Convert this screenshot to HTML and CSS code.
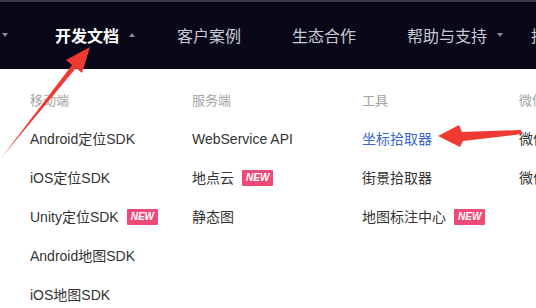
FILE: index.html
```html
<!DOCTYPE html>
<html lang="zh-CN">
<head>
  <meta charset="UTF-8" />
  <title>开发文档</title>
  <link rel="stylesheet" href="styles.css">
</head>
<body>

  <!-- top navigation -->
  <nav class="navbar">
    <span class="caret caret-down edge-caret"></span>
    <a class="nav-item active">开发文档<span class="caret caret-up"></span></a>
    <a class="nav-item">客户案例</a>
    <a class="nav-item">生态合作</a>
    <a class="nav-item help">帮助与支持<span class="caret caret-down"></span></a>
    <a class="nav-item">推</a>
  </nav>

  <!-- dropdown panel -->
  <div class="menu">
    <div class="col">
      <div class="col-title">移动端</div>
      <a class="link">Android定位SDK</a>
      <a class="link">iOS定位SDK</a>
      <a class="link">Unity定位SDK <span class="badge">NEW</span></a>
      <a class="link">Android地图SDK</a>
      <a class="link">iOS地图SDK</a>
    </div>
    <div class="col">
      <div class="col-title">服务端</div>
      <a class="link">WebService API</a>
      <a class="link">地点云 <span class="badge">NEW</span></a>
      <a class="link">静态图</a>
    </div>
    <div class="col">
      <div class="col-title">工具</div>
      <a class="link current">坐标拾取器</a>
      <a class="link">街景拾取器</a>
      <a class="link">地图标注中心 <span class="badge">NEW</span></a>
    </div>
    <div class="col">
      <div class="col-title">微信</div>
      <a class="link">微信小程序</a>
      <a class="link">微信公众号</a>
    </div>
  </div>

  <!-- annotation arrows drawn over the screenshot -->
  <svg class="marks" width="536" height="308" viewBox="0 0 536 308">
    <polygon points="90,47 82,73 76,68 2,157 72,65 66,60" fill="#ee3a33"/>
    <polygon points="438,136 459,125 462,132 521,130 522,134 463,141 460,147" fill="#ee3a33"/>
  </svg>

</body>
</html>
```

FILE: styles.css
```css
* { margin: 0; padding: 0; box-sizing: border-box; }

body {
  font-family: "Liberation Sans", "Noto Sans CJK SC", sans-serif;
  background: #fff;
  width: 536px;
  height: 308px;
  overflow: hidden;
  position: relative;
}

.navbar {
  height: 69px;
  background: #080818;
  border-top: 2px solid #3b3a44;
  display: flex;
  align-items: center;
  padding: 0 0 2px 0;
  white-space: nowrap;
}

.nav-item {
  color: #c9cad3;
  font-size: 16px;
  text-decoration: none;
  display: flex;
  align-items: center;
  margin-right: 51px;
}

.nav-item:first-of-type {
  margin-left: 47px;
}

.nav-item.active {
  color: #fff;
  font-weight: bold;
  margin-right: 42px;
}

.nav-item.help {
  margin-right: 28px;
}

.caret {
  display: inline-block;
  width: 0;
  height: 0;
  border-left: 3px solid transparent;
  border-right: 3px solid transparent;
  margin-left: 10px;
}

.caret-down { border-top: 4px solid #8a8b97; }
.caret-up { border-bottom: 4px solid #8a8b97; }

.edge-caret {
  margin-left: 2px;
}

.menu {
  display: grid;
  grid-template-columns: 162px 170px 157px 120px;
  padding: 21px 0 0 30px;
}

.col {
  display: flex;
  flex-direction: column;
}

.col-title {
  color: #a3a3a3;
  font-size: 13px;
  height: 22px;
  line-height: 22px;
  margin-bottom: 17px;
}

.link {
  color: #333;
  font-size: 14px;
  height: 20px;
  line-height: 20px;
  margin-bottom: 19px;
  white-space: nowrap;
  display: flex;
  align-items: center;
}

.link.current {
  color: #3a66d1;
}

.badge {
  display: inline-block;
  margin-left: 8px;
  background: #ee4a78;
  color: #fff;
  font-size: 10px;
  font-weight: bold;
  font-style: italic;
  height: 16px;
  line-height: 16px;
  padding: 0 4px;
  border-radius: 1px;
}

.marks {
  position: absolute;
  top: 0;
  left: 0;
}
```
